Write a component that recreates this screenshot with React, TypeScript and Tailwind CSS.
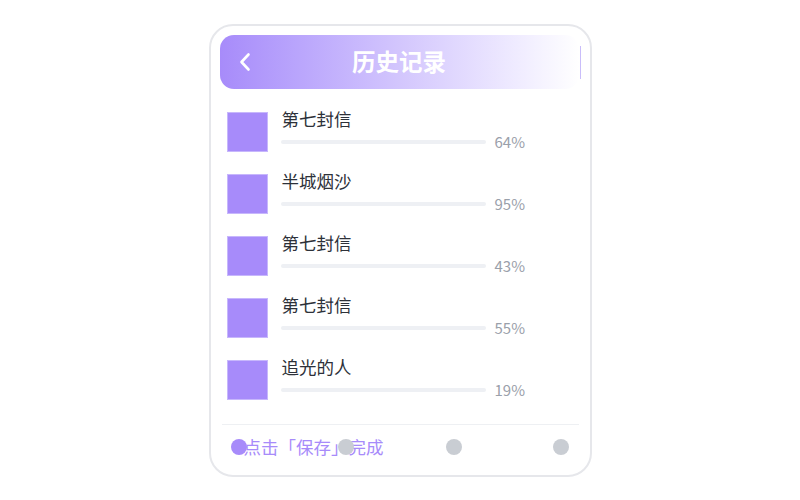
import React from 'react';

const items = [
    { title: '第七封信', pct: 64 },
    { title: '半城烟沙', pct: 95 },
    { title: '第七封信', pct: 43 },
    { title: '第七封信', pct: 55 },
    { title: '追光的人', pct: 19 },
];

const font = { fontFamily: '"Noto Sans CJK SC", "Noto Sans", sans-serif' };

export default function App() {
    return (
        <div className="w-[800px] h-[500px] bg-white flex justify-center pt-[24px]" style={font}>
            <div className="w-[383px] h-[453px] rounded-[24px] border-2 border-[#e6e7eb] px-[9px] pt-[9px] flex flex-col">
                {/* Header */}
                <div className="flex items-center">
                    <div className="relative flex-1 h-[54px] rounded-[14px] bg-gradient-to-r from-[#a78bfa] via-[#d3c6fd] to-white flex items-center justify-center">
                        <svg className="absolute left-[18px] top-1/2 -translate-y-1/2" width="14" height="22" viewBox="0 0 14 22" fill="none">
                            <path d="M10.5 3.5 L3.5 11 L10.5 18.5" stroke="white" strokeWidth="2.6" strokeLinecap="round" strokeLinejoin="round" />
                        </svg>
                        <span className="text-white text-[23.5px] font-bold leading-none">历史记录</span>
                    </div>
                    <div className="w-[1px] h-[33px] bg-[#c9bdfa] ml-[1px]" />
                </div>

                {/* List */}
                <div className="flex flex-col gap-[22px] pt-[23px] pl-[7px]">
                    {items.map((it, i) => (
                        <div key={i} className="flex items-start">
                            <div className="w-[41px] h-[40px] bg-[#a78bfa] border border-[#c7b7fc] shrink-0" />
                            <div className="ml-[13px] flex flex-col">
                                <span className="text-[17.5px] leading-[20px] text-[#2d3139] -mt-[3px] ml-[1px]">{it.title}</span>
                                <div className="flex items-center mt-[5px]">
                                    <div className="w-[205px] h-[4px] rounded-full bg-[#eef0f4]" />
                                    <span className="ml-[9px] text-[15px] leading-none text-[#9aa0aa]">{it.pct}%</span>
                                </div>
                            </div>
                        </div>
                    ))}
                </div>

                {/* Footer */}
                <div className="mt-auto mb-[14px] mx-[2px] border-t border-[#eef0f3] relative h-[37px]">
                    <div className="absolute left-[22px] top-[13px] text-[17.5px] leading-none text-[#a78bfa]">点击「保存」完成</div>
                    <div className="absolute inset-x-0 top-[14px] flex justify-between px-[9px]">
                        <span className="w-[16px] h-[16px] rounded-full bg-[#a78bfa]" />
                        <span className="w-[16px] h-[16px] rounded-full bg-[#c9cdd3]" />
                        <span className="w-[16px] h-[16px] rounded-full bg-[#c9cdd3]" />
                        <span className="w-[16px] h-[16px] rounded-full bg-[#c9cdd3]" />
                    </div>
                </div>
            </div>
        </div>
    );
}
